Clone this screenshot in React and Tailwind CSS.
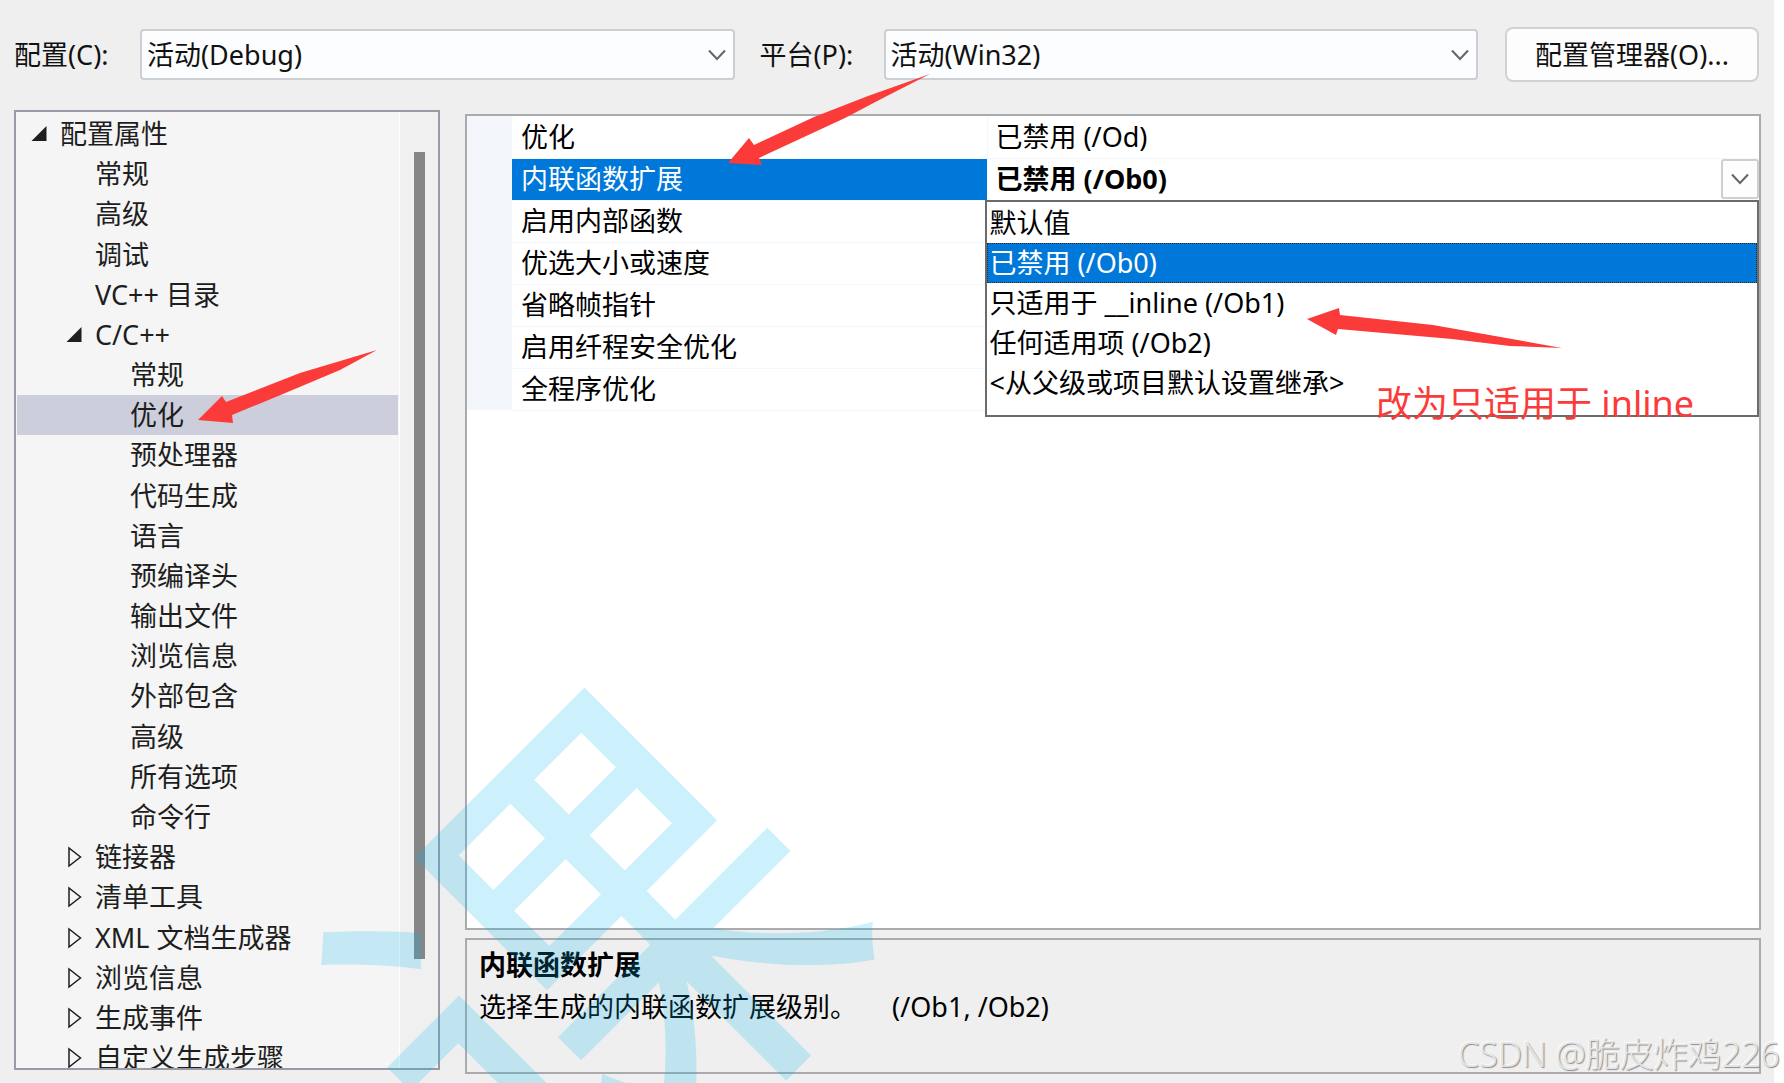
import React, { useState } from 'react';
import clsx from 'clsx';

const TREE = [
    { label: '配置属性', level: 0, state: 'open' },
    { label: '常规', level: 1 },
    { label: '高级', level: 1 },
    { label: '调试', level: 1 },
    { label: 'VC++ 目录', level: 1 },
    { label: 'C/C++', level: 1, state: 'open' },
    { label: '常规', level: 2 },
    { label: '优化', level: 2 },
    { label: '预处理器', level: 2 },
    { label: '代码生成', level: 2 },
    { label: '语言', level: 2 },
    { label: '预编译头', level: 2 },
    { label: '输出文件', level: 2 },
    { label: '浏览信息', level: 2 },
    { label: '外部包含', level: 2 },
    { label: '高级', level: 2 },
    { label: '所有选项', level: 2 },
    { label: '命令行', level: 2 },
    { label: '链接器', level: 1, state: 'closed' },
    { label: '清单工具', level: 1, state: 'closed' },
    { label: 'XML 文档生成器', level: 1, state: 'closed' },
    { label: '浏览信息', level: 1, state: 'closed' },
    { label: '生成事件', level: 1, state: 'closed' },
    { label: '自定义生成步骤', level: 1, state: 'closed' },
];

const INDENT = ['pl-[14px]', 'pl-[49px]', 'pl-[84px]'];

const PROPERTIES = [
    { name: '优化', value: '已禁用 (/Od)' },
    { name: '内联函数扩展', value: '已禁用 (/Ob0)' },
    { name: '启用内部函数', value: '' },
    { name: '优选大小或速度', value: '' },
    { name: '省略帧指针', value: '' },
    { name: '启用纤程安全优化', value: '' },
    { name: '全程序优化', value: '' },
];

const OPTIONS = [
    '默认值',
    '已禁用 (/Ob0)',
    '只适用于 __inline (/Ob1)',
    '任何适用项 (/Ob2)',
    '<从父级或项目默认设置继承>',
];

const Chevron = ({ className }) => (
    <svg viewBox="0 0 18 12" className={clsx('w-[18px] h-3 pointer-events-none', className)} fill="none" stroke="#666" strokeWidth="2">
        <path d="M1 1.5 L9 10 L17 1.5" />
    </svg>
);

const Expander = ({ state }) => (
    <svg viewBox="0 0 16 22" className="w-4 h-[22px] shrink-0" aria-hidden="true">
        {state === 'open' && <path d="M15.5 3 V18 H0.5 Z" fill="#1e1e1e" />}
        {state === 'closed' && <path d="M3 2 V20 L14.5 11 Z" fill="none" stroke="#1e1e1e" strokeWidth="1.5" />}
    </svg>
);

const Combo = ({ id, value }) => (
    <div className="relative flex-1">
        <select
            id={id}
            defaultValue={value}
            className="appearance-none block w-full h-[51px] pl-[5px] pr-10 bg-[#fcfdfe] border-2 border-[#cbcfd3] rounded-[4px] outline-none"
        >
            <option>{value}</option>
        </select>
        <Chevron className="absolute right-[9px] top-5" />
    </div>
);

const ConfigTree = () => {
    const [selected, setSelected] = useState(7);

    return (
        <nav className="w-[426px] shrink-0 flex overflow-hidden bg-[#f5f5f5] border-2 border-[#989ba5]">
            <ul className="flex-1 h-[966px] pt-0.5 px-px flex flex-col text-[#1e1e1e] border-r border-white">
                {TREE.map((item, i) => (
                    <li key={i} className="flex-1 flex">
                        <button
                            type="button"
                            onClick={() => setSelected(i)}
                            className={clsx(
                                'w-full flex items-center gap-[13px] text-left whitespace-nowrap',
                                INDENT[item.level],
                                selected === i && 'bg-[#cccedb]'
                            )}
                        >
                            <Expander state={item.state} />
                            {item.label}
                        </button>
                    </li>
                ))}
            </ul>
            <div className="w-[38px] flex flex-col items-center bg-[#f0f0f0] pt-10 pb-[109px]">
                <div className="w-[11px] flex-1 bg-[#868686]"></div>
            </div>
        </nav>
    );
};

const PropertyGrid = () => {
    const [choice, setChoice] = useState(1);

    return (
        <div className="flex-1 bg-white border-2 border-[#a9abad]">
            <table className="w-full table-fixed border-collapse text-left text-black">
                <tbody>
                    {PROPERTIES.map((row, i) => (
                        <tr key={row.name} className="h-[42px]">
                            <td className="w-[45px] bg-[#f3f7fc]"></td>
                            <th
                                scope="row"
                                className={clsx(
                                    'w-[475px] h-[42px] p-0 pl-[9px] font-normal border-b border-[#f3f7fc]',
                                    i === 1 && 'bg-[#0078d9] text-white'
                                )}
                            >
                                {row.name}
                            </th>
                            <td className="h-[42px] p-0 border-b border-l border-[#f3f7fc]">
                                {i === 1 ? (
                                    <div className="relative flex items-center justify-between pl-2">
                                        <span className="font-bold">{row.value}</span>
                                        <button
                                            type="button"
                                            aria-label="展开"
                                            className="w-[38px] h-10 flex items-center justify-center bg-[#fdfdfd] border-2 border-[#cfcfcf] rounded-[3px]"
                                        >
                                            <Chevron />
                                        </button>
                                        <ul
                                            role="listbox"
                                            className="absolute z-10 top-full -left-[3px] right-0 mt-px h-[217px] pt-px bg-white border-2 border-[#6b6b6b]"
                                        >
                                            {OPTIONS.map((option, k) => (
                                                <li
                                                    key={option}
                                                    role="option"
                                                    aria-selected={choice === k}
                                                    onClick={() => setChoice(k)}
                                                    className={clsx(
                                                        'h-10 flex items-center pl-[3px] whitespace-nowrap',
                                                        choice === k && 'bg-[#0078d9] text-white outline-1 -outline-offset-1 outline-dotted outline-[#3a2a10]'
                                                    )}
                                                >
                                                    {option}
                                                </li>
                                            ))}
                                        </ul>
                                    </div>
                                ) : (
                                    <span className="pl-2">{row.value}</span>
                                )}
                            </td>
                        </tr>
                    ))}
                </tbody>
            </table>
        </div>
    );
};

// Hand-drawn notes that lie over the dialog
const Annotations = () => (
    <div className="absolute inset-0 z-20 overflow-hidden pointer-events-none">
        <svg className="absolute inset-0 w-full h-full" fill="#fb3b39">
            <path d="M728 163 L749 138 L754 145 L814 117 L868 96 L930 74 L883 98 L845 118 L759 158 L762 165 Z" />
            <path d="M198 420 L222 396 L226 402 L300 373 L377 350 L340 370 L283 394 L232 415 L233 423 Z" />
            <path d="M1307 319 L1339 308 L1340 315 L1433 325 L1562 348 L1510 346 L1452 339 L1338 329 L1336 335 Z" />
        </svg>
        <p className="absolute left-[1376px] top-[378px] text-[36px] leading-[52px] text-[#fb3b39] whitespace-nowrap">
            改为只适用于 inline
        </p>
        <p className="absolute left-[350px] top-[720px] text-[480px] leading-[480px] -rotate-45 text-[#00b4f0]/20">课</p>
        <p className="absolute right-1 bottom-1 text-[34px] leading-[50px] font-light whitespace-nowrap text-[#e4e4e4] [text-shadow:1px_1px_1px_#8c8c8c,-1px_-1px_0_#fafafa]">
            CSDN @脆皮炸鸡226
        </p>
    </div>
);

const App = () => {
    return (
        <div className="relative h-screen pr-2.5 bg-white overflow-hidden text-[27px] leading-10 font-['Noto_Sans','Noto_Sans_CJK_SC',sans-serif]">
            <div className="h-full flex flex-col bg-[#efefef]">
                <header className="flex items-center pt-[27px] pl-3.5 pr-[15px] text-[#111]">
                    <label htmlFor="config" className="w-[126px]">配置(C):</label>
                    <Combo id="config" value="活动(Debug)" />
                    <label htmlFor="platform" className="w-[149px] pl-[25px]">平台(P):</label>
                    <Combo id="platform" value="活动(Win32)" />
                    <button type="button" className="w-[254px] h-[55px] ml-[27px] bg-[#fdfdfd] border-2 border-[#d2d2d2] rounded-lg">
                        配置管理器(O)...
                    </button>
                </header>

                <main className="flex-1 min-h-0 flex gap-[25px] pt-7 pl-3.5 pr-[13px]">
                    <div className="flex mb-[13px]">
                        <ConfigTree />
                    </div>
                    <div className="flex-1 flex flex-col gap-2 pt-1 pb-[9px]">
                        <PropertyGrid />
                        <section className="h-[136px] px-3 pt-1 text-black border-2 border-[#a9abad]">
                            <h2 className="font-bold leading-[42px]">内联函数扩展</h2>
                            <p className="leading-[42px] whitespace-pre">选择生成的内联函数扩展级别。     (/Ob1, /Ob2)</p>
                        </section>
                    </div>
                </main>
            </div>
            <Annotations />
        </div>
    );
};

export default App;
